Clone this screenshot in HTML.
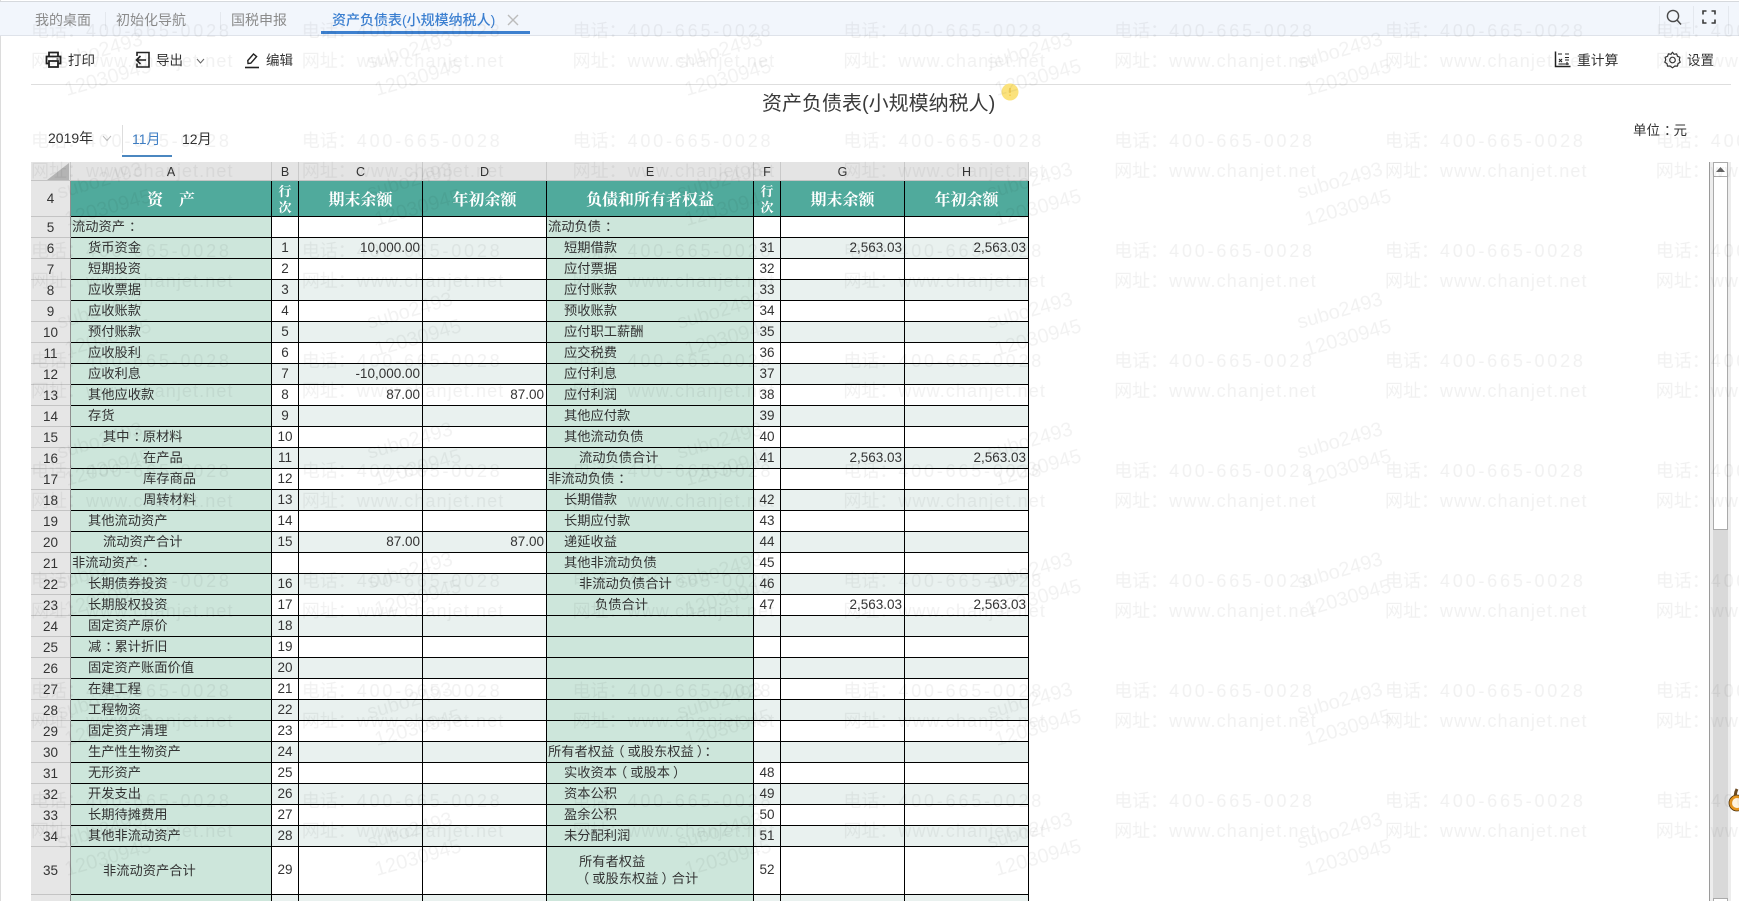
<!DOCTYPE html>
<html lang="zh-CN">
<head>
<meta charset="utf-8">
<title>资产负债表(小规模纳税人)</title>
<style>
html,body{margin:0;padding:0;width:1739px;height:901px;overflow:hidden;background:#fff}
body{position:relative;font-family:"Liberation Sans","Noto Sans CJK SC",sans-serif;color:#333;font-size:13px}
.abs{position:absolute;white-space:nowrap}
.c{position:relative;left:4px}
.pl{position:relative;left:-3px}
.pr{position:relative;left:3px}
#bar{left:0;top:1px;width:1739px;height:33px;background:#f2f6fc;border-top:1px solid #d6d9dd;border-bottom:1px solid #dfe3ea}
#edge{left:0;top:0;width:1px;height:901px;background:#dcdcdc}
.tab{top:10px;font-size:14px;line-height:20px;color:#8b8b8b}
.sep{width:1px;background:#e4e8ee}
.tool{top:51px;font-size:13.5px;line-height:20px;color:#333}
table{position:absolute;left:31px;top:162px;border-collapse:separate;border-spacing:0;table-layout:fixed;width:998px}
td{box-sizing:border-box;border-right:1px solid #000;border-bottom:1px solid #000;padding:0 0 1px 0;height:21px;line-height:15px;overflow:hidden;white-space:nowrap;background:#fff;font-size:13.25px;color:#333}
tr.h td{height:19px;background:#e4e4e4;border-right:1px solid #c9c9c9;border-bottom:1px solid #c4c4c4;text-align:center;font-size:12.5px;color:#333;line-height:14px;padding-top:1px}
tr.t td{height:36px;background:#50aa9c;color:#fff;font-family:"Noto Serif CJK SC","Noto Sans CJK SC",serif;font-weight:700;font-size:16px;text-align:center;line-height:18px}
tr.t td.s{font-size:13px;line-height:16px;white-space:normal}
tr.a td{background:#e9f1ef}
td:nth-child(1),tr.a td:nth-child(1),tr.t td:nth-child(1){background:#e6e6e6;color:#333;border-right:1px solid #8f8f8f;border-bottom:1px solid #c4c4c4;text-align:center;font-family:"Liberation Sans",sans-serif;font-weight:400;font-size:13.5px;line-height:15px;padding:0}
td:nth-child(2),td:nth-child(6),tr.a td:nth-child(2),tr.a td:nth-child(6){background:#cde6db;padding-left:1px}
td:nth-child(3),td:nth-child(7){text-align:center;font-size:13.5px;padding-bottom:2px}
td:nth-child(4),td:nth-child(5),td:nth-child(8),td:nth-child(9){text-align:right;padding-right:2px;font-size:13.5px}
tr.t td:nth-child(n+2){padding:0;text-align:center;background:#50aa9c}
tr.h td:nth-child(n+1){background:#e4e4e4;padding:1px 0 0 0;text-align:center;font-size:12.5px}
td.i1{padding-left:17px!important}
td.i2{padding-left:32px!important}
td.i3{padding-left:72px!important}
td.j3{padding-left:48px!important}
tr.b td{height:48px;line-height:17px}
#wrap{position:absolute;left:0;top:0;width:1739px;height:901px;overflow:hidden}
#wm{position:absolute;left:0;top:0;pointer-events:none}
</style>
</head>
<body>
<div class="abs" id="edge"></div>
<div class="abs" id="bar"></div>

<div class="abs tab" style="left:35px">我的桌面</div>
<div class="abs sep" style="left:105px;top:12px;height:18px"></div>
<div class="abs tab" style="left:116px">初始化导航</div>
<div class="abs sep" style="left:220px;top:12px;height:18px"></div>
<div class="abs tab" style="left:231px">国税申报</div>
<div class="abs tab" style="left:332px;color:#3b7fd0;font-weight:500">资产负债表(小规模纳税人)</div>
<div class="abs" style="left:321px;top:31px;width:209px;height:3px;background:#3d80cf"></div>
<svg class="abs" style="left:507px;top:14px" width="12" height="12" viewBox="0 0 12 12"><path d="M1 1L11 11M11 1L1 11" stroke="#bcbcbc" stroke-width="1.4" fill="none"/></svg>

<div class="abs sep" style="left:1659px;top:6px;height:28px"></div>
<div class="abs sep" style="left:1693px;top:6px;height:28px"></div>
<div class="abs sep" style="left:1728px;top:6px;height:28px"></div>
<svg class="abs" style="left:1665px;top:9px" width="18" height="18" viewBox="0 0 18 18"><circle cx="8" cy="7" r="5.6" fill="none" stroke="#4a4a4a" stroke-width="1.4"/><path d="M12 11L16 15.5" stroke="#4a4a4a" stroke-width="1.5" fill="none"/></svg>
<svg class="abs" style="left:1702px;top:10px" width="14" height="14" viewBox="0 0 14 14"><path d="M1 4.5V1H4.5M9.5 1H13V4.5M13 9.5V13H9.5M4.5 13H1V9.5" stroke="#3a3a3a" stroke-width="1.6" fill="none"/></svg>

<!-- toolbar -->
<svg class="abs" style="left:45px;top:51px" width="17" height="18" viewBox="0 0 17 18"><path d="M4 5V1.5H13V5M4 12.5H1.5V5.5H15.5V12.5H13M4 10V16H13V10H4Z" fill="none" stroke="#222" stroke-width="1.8"/><path d="M11.5 8H13.5" stroke="#222" stroke-width="1.2"/></svg>
<div class="abs tool" style="left:68px">打印</div>
<svg class="abs" style="left:134px;top:51px" width="17" height="18" viewBox="0 0 17 18"><path d="M3 5V1.5H15V16H3V12.5" fill="none" stroke="#222" stroke-width="1.6"/><path d="M12 9H2.5M6.5 5L2.5 9L6.5 13" fill="none" stroke="#222" stroke-width="1.6"/></svg>
<div class="abs tool" style="left:156px">导出</div>
<svg class="abs" style="left:196px;top:58px" width="9" height="6" viewBox="0 0 9 6"><path d="M1 1L4.5 5L8 1" fill="none" stroke="#666" stroke-width="1"/></svg>
<svg class="abs" style="left:244px;top:52px" width="16" height="17" viewBox="0 0 16 17"><path d="M4 11.5L3.8 8.5L9.5 2L12.6 4.6L6.8 11.2Z" fill="none" stroke="#222" stroke-width="1.4"/><path d="M1 15.5H15" stroke="#222" stroke-width="1.6"/></svg>
<div class="abs tool" style="left:266px">编辑</div>
<svg class="abs" style="left:1554px;top:51px" width="17" height="17" viewBox="0 0 17 17"><path d="M1.5 0.5V15.5H16.5" fill="none" stroke="#222" stroke-width="1.5"/><path d="M4 3H8M11 3H15M5 8L8 11M8 8L5 11M11 6.5H15M11 9H15M4.5 13H15M13 11V14" fill="none" stroke="#222" stroke-width="1.1"/></svg>
<div class="abs tool" style="left:1577px;font-size:13.8px">重计算</div>
<svg class="abs" style="left:1664px;top:51px" width="17" height="18" viewBox="0 0 17 18"><path d="M8.5 1.2L10 3.3L12.6 2.9L13.5 5.3L15.9 6.3L15.3 8.9L16.2 11.2L14 12.6L13.5 15.1L10.9 15L8.5 16.8L6.1 15L3.5 15.1L3 12.6L0.8 11.2L1.7 8.9L1.1 6.3L3.5 5.3L4.4 2.9L7 3.3Z" fill="none" stroke="#333" stroke-width="1.2" stroke-linejoin="round"/><circle cx="8.5" cy="9" r="2.8" fill="none" stroke="#333" stroke-width="1.2"/></svg>
<div class="abs tool" style="left:1687px">设置</div>
<div class="abs" style="left:31px;top:84px;width:1700px;height:1px;background:#dedede"></div>

<!-- title -->
<div class="abs" style="left:762px;top:90px;font-size:20px;line-height:29px;color:#3a3a3a;font-weight:400">资产负债表(小规模纳税人)</div>
<svg class="abs" style="left:1000px;top:82px" width="20" height="20" viewBox="0 0 20 20"><circle cx="10" cy="10" r="8.5" fill="#fbe27c"/><path d="M10 6V11M10 12.5V14" stroke="#f2c94c" stroke-width="1.5"/></svg>

<!-- period -->
<div class="abs" style="left:48px;top:128px;font-size:14px;line-height:20px;color:#333">2019年</div>
<svg class="abs" style="left:102px;top:135px" width="10" height="7" viewBox="0 0 10 7"><path d="M1 1L5 5.5L9 1" fill="none" stroke="#bbb" stroke-width="1"/></svg>
<div class="abs" style="left:122px;top:125px;width:1px;height:28px;background:#ddd"></div>
<div class="abs" style="left:132px;top:129px;font-size:14px;line-height:20px;color:#3f7fc5">11月</div>
<div class="abs" style="left:182px;top:129px;font-size:14px;line-height:20px;color:#333">12月</div>
<div class="abs" style="left:122px;top:155px;width:50px;height:2px;background:#4b87c0"></div>
<div class="abs" style="left:1633px;top:121px;font-size:13.5px;line-height:20px;color:#333">单位<span class="c">：</span>元</div>

<!-- sheet -->
<div id="wrap">
<table>
<colgroup><col style="width:40px"><col style="width:201px"><col style="width:27px"><col style="width:124px"><col style="width:124px"><col style="width:207px"><col style="width:27px"><col style="width:124px"><col style="width:124px"></colgroup>
<tr class="h"><td style="position:relative"><svg style="position:absolute;left:16px;top:1px" width="22" height="17" viewBox="0 0 22 17"><path d="M22 0V17H0Z" fill="#b4b4b4"/></svg></td><td>A</td><td>B</td><td>C</td><td>D</td><td>E</td><td>F</td><td>G</td><td>H</td></tr>
<tr class="t"><td>4</td><td>资　产</td><td class="s">行<br>次</td><td>期末余额</td><td>年初余额</td><td>负债和所有者权益</td><td class="s">行<br>次</td><td>期末余额</td><td>年初余额</td></tr>
<tr><td>5</td><td>流动资产<span class="c">：</span></td><td></td><td></td><td></td><td>流动负债<span class="c">：</span></td><td></td><td></td><td></td></tr>
<tr class="a"><td>6</td><td class="i1">货币资金</td><td>1</td><td>10,000.00</td><td></td><td class="i1">短期借款</td><td>31</td><td>2,563.03</td><td>2,563.03</td></tr>
<tr><td>7</td><td class="i1">短期投资</td><td>2</td><td></td><td></td><td class="i1">应付票据</td><td>32</td><td></td><td></td></tr>
<tr class="a"><td>8</td><td class="i1">应收票据</td><td>3</td><td></td><td></td><td class="i1">应付账款</td><td>33</td><td></td><td></td></tr>
<tr><td>9</td><td class="i1">应收账款</td><td>4</td><td></td><td></td><td class="i1">预收账款</td><td>34</td><td></td><td></td></tr>
<tr class="a"><td>10</td><td class="i1">预付账款</td><td>5</td><td></td><td></td><td class="i1">应付职工薪酬</td><td>35</td><td></td><td></td></tr>
<tr><td>11</td><td class="i1">应收股利</td><td>6</td><td></td><td></td><td class="i1">应交税费</td><td>36</td><td></td><td></td></tr>
<tr class="a"><td>12</td><td class="i1">应收利息</td><td>7</td><td>-10,000.00</td><td></td><td class="i1">应付利息</td><td>37</td><td></td><td></td></tr>
<tr><td>13</td><td class="i1">其他应收款</td><td>8</td><td>87.00</td><td>87.00</td><td class="i1">应付利润</td><td>38</td><td></td><td></td></tr>
<tr class="a"><td>14</td><td class="i1">存货</td><td>9</td><td></td><td></td><td class="i1">其他应付款</td><td>39</td><td></td><td></td></tr>
<tr><td>15</td><td class="i2">其中<span class="c">：</span>原材料</td><td>10</td><td></td><td></td><td class="i1">其他流动负债</td><td>40</td><td></td><td></td></tr>
<tr class="a"><td>16</td><td class="i3">在产品</td><td>11</td><td></td><td></td><td class="i2">流动负债合计</td><td>41</td><td>2,563.03</td><td>2,563.03</td></tr>
<tr><td>17</td><td class="i3">库存商品</td><td>12</td><td></td><td></td><td>非流动负债<span class="c">：</span></td><td></td><td></td><td></td></tr>
<tr class="a"><td>18</td><td class="i3">周转材料</td><td>13</td><td></td><td></td><td class="i1">长期借款</td><td>42</td><td></td><td></td></tr>
<tr><td>19</td><td class="i1">其他流动资产</td><td>14</td><td></td><td></td><td class="i1">长期应付款</td><td>43</td><td></td><td></td></tr>
<tr class="a"><td>20</td><td class="i2">流动资产合计</td><td>15</td><td>87.00</td><td>87.00</td><td class="i1">递延收益</td><td>44</td><td></td><td></td></tr>
<tr><td>21</td><td>非流动资产<span class="c">：</span></td><td></td><td></td><td></td><td class="i1">其他非流动负债</td><td>45</td><td></td><td></td></tr>
<tr class="a"><td>22</td><td class="i1">长期债券投资</td><td>16</td><td></td><td></td><td class="i2">非流动负债合计</td><td>46</td><td></td><td></td></tr>
<tr><td>23</td><td class="i1">长期股权投资</td><td>17</td><td></td><td></td><td class="j3">负债合计</td><td>47</td><td>2,563.03</td><td>2,563.03</td></tr>
<tr class="a"><td>24</td><td class="i1">固定资产原价</td><td>18</td><td></td><td></td><td></td><td></td><td></td><td></td></tr>
<tr><td>25</td><td class="i1">减<span class="c">：</span>累计折旧</td><td>19</td><td></td><td></td><td></td><td></td><td></td><td></td></tr>
<tr class="a"><td>26</td><td class="i1">固定资产账面价值</td><td>20</td><td></td><td></td><td></td><td></td><td></td><td></td></tr>
<tr><td>27</td><td class="i1">在建工程</td><td>21</td><td></td><td></td><td></td><td></td><td></td><td></td></tr>
<tr class="a"><td>28</td><td class="i1">工程物资</td><td>22</td><td></td><td></td><td></td><td></td><td></td><td></td></tr>
<tr><td>29</td><td class="i1">固定资产清理</td><td>23</td><td></td><td></td><td></td><td></td><td></td><td></td></tr>
<tr class="a"><td>30</td><td class="i1">生产性生物资产</td><td>24</td><td></td><td></td><td>所有者权益<span class="pl">（</span>或股东权益<span class="pr">）</span><span class="c">：</span></td><td></td><td></td><td></td></tr>
<tr><td>31</td><td class="i1">无形资产</td><td>25</td><td></td><td></td><td class="i1">实收资本<span class="pl">（</span>或股本<span class="pr">）</span></td><td>48</td><td></td><td></td></tr>
<tr class="a"><td>32</td><td class="i1">开发支出</td><td>26</td><td></td><td></td><td class="i1">资本公积</td><td>49</td><td></td><td></td></tr>
<tr><td>33</td><td class="i1">长期待摊费用</td><td>27</td><td></td><td></td><td class="i1">盈余公积</td><td>50</td><td></td><td></td></tr>
<tr class="a"><td>34</td><td class="i1">其他非流动资产</td><td>28</td><td></td><td></td><td class="i1">未分配利润</td><td>51</td><td></td><td></td></tr>
<tr class="b"><td>35</td><td class="i2">非流动资产合计</td><td>29</td><td></td><td></td><td class="i2">所有者权益<br><span class="pl">（</span>或股东权益<span class="pr">）</span>合计</td><td>52</td><td></td><td></td></tr>
<tr class="a"><td></td><td></td><td></td><td></td><td></td><td></td><td></td><td></td><td></td></tr>
</table>
</div>

<!-- scrollbar -->
<div class="abs" style="left:1709px;top:162px;width:1px;height:739px;background:#9a9a9a"></div>
<div class="abs" style="left:1710px;top:162px;width:21px;height:739px;background:#ededed"></div>
<div class="abs" style="left:1713px;top:162px;width:15px;height:739px;background:#d9d9d9"></div>
<div class="abs" style="left:1713px;top:162px;box-sizing:border-box;width:15px;height:15px;background:#fff;border:1px solid #aaa"></div>
<svg class="abs" style="left:1716px;top:167px" width="9" height="5" viewBox="0 0 9 5"><path d="M4.5 0L9 5H0Z" fill="#666"/></svg>
<div class="abs" style="left:1713px;top:177px;box-sizing:border-box;width:15px;height:353px;background:#fff;border:1px solid #aaa;border-top:none"></div>
<div class="abs" style="left:1713px;top:898px;box-sizing:border-box;width:15px;height:3px;background:#fff;border:1px solid #aaa;border-bottom:none"></div>
<svg class="abs" style="left:1728px;top:788px" width="11" height="26" viewBox="0 0 11 26"><path d="M9 1C7 5 7 9 8 12" stroke="#6b4a22" stroke-width="3" fill="none"/><circle cx="9" cy="15" r="6.5" fill="#fff4e0" stroke="#e6951e" stroke-width="3"/><circle cx="9" cy="15" r="8" fill="none" stroke="#4a3310" stroke-width=".8"/></svg>

<!-- watermark -->
<svg id="wm" width="1739" height="901" viewBox="0 0 1739 901">
<defs>
<pattern id="p1" patternUnits="userSpaceOnUse" x="31" y="0" width="270.8" height="110">
<text x="0" y="37" font-family="Liberation Sans,Noto Sans CJK SC,sans-serif" font-size="18"><tspan>电话：</tspan><tspan dx="1" letter-spacing="2.8">400-665-0028</tspan></text>
<text x="0" y="67" font-family="Liberation Sans,Noto Sans CJK SC,sans-serif" font-size="18"><tspan>网址：</tspan><tspan dx="1" letter-spacing="1.1">www.chanjet.net</tspan></text>
</pattern>
<pattern id="p2" patternUnits="userSpaceOnUse" x="-55" y="0" width="310" height="130">
<text x="155" y="51" text-anchor="middle" dominant-baseline="central" transform="rotate(-16 155 51)" font-family="Liberation Sans,sans-serif" font-size="20">subo2493</text>
<text x="163" y="78" text-anchor="middle" dominant-baseline="central" transform="rotate(-16 163 78)" font-family="Liberation Sans,sans-serif" font-size="20">12030945</text>
</pattern>
</defs>
<rect width="1739" height="901" fill="url(#p1)" opacity=".055"/>
<rect width="1400" height="901" fill="url(#p2)" opacity=".05"/>
</svg>
</body>
</html>
